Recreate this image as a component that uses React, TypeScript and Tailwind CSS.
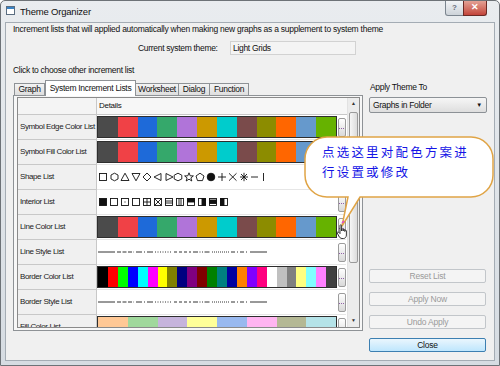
import type { FC, ReactNode } from "react";

const edgeColors = ["#4b4b4b", "#f04146", "#1e6ad9", "#35a86b", "#b074d9", "#cc9900", "#00cccc", "#7a4b4b", "#8c8c00", "#ff6600", "#6699cc", "#66b200"];
const borderColors = [
	"#000000", "#ff0000", "#00ff00", "#0000ff", "#00ffff", "#ff00ff", "#ffff00", "#808000",
	"#000080", "#800080", "#800000", "#008000", "#008080", "#0000a0", "#ff8000", "#8000ff",
	"#ff0080", "#ffffff", "#c0c0c0", "#808080", "#ffff80", "#80ffff", "#ff80ff", "#404040",
];
const fillColors = ["#ffc895", "#a0d89c", "#c6b4dc", "#ffff99", "#99b9ef", "#ffb5f1", "#b4b894", "#b5e3e8"];

const ColorBar: FC<{ colors: string[] }> = ({ colors }) => (
	<div className="flex h-[22px] w-[240px] border border-[#2e2e2e]">
		{colors.map((c, i) => (
			<div key={i} className="flex-1" style={{ backgroundColor: c }} />
		))}
	</div>
);

const DotsButton: FC = () => (
	<div className="flex h-[19px] w-[8px] items-center justify-center gap-[1px] rounded-[2px] border border-[#9c9c9c] bg-gradient-to-b from-white to-[#d9d9d9] pt-[3px]">
		<span className="h-[1px] w-[1px] bg-[#9060a8]" />
		<span className="h-[1px] w-[1px] bg-[#9060a8]" />
		<span className="h-[1px] w-[1px] bg-[#9060a8]" />
	</div>
);

const Row: FC<{ label: string; children: ReactNode }> = ({ label, children }) => (
	<div className="flex h-[25px] shrink-0">
		<div className="flex w-[79px] shrink-0 items-center overflow-hidden whitespace-nowrap border-r border-b border-[#c8c8c8] bg-[#f0f0f0] pl-[2px] text-[8px] tracking-[-0.4px] text-[#222]">
			{label}
		</div>
		<div className="flex w-[240px] shrink-0 items-center border-b border-[#e6e6e6] bg-white">{children}</div>
		<div className="flex w-[9px] shrink-0 items-center justify-center border-b border-[#e6e6e6] bg-white">
			<DotsButton />
		</div>
	</div>
);

const ShapeList: FC = () => (
	<svg width="180" height="10" viewBox="0 0 180 10" fill="none" stroke="#111" strokeWidth="0.9">
		<rect x="1.5" y="1.5" width="7" height="7" />
		<path d="M16.5 1.2 L20 3 V7 L16.5 8.8 L13 7 V3 Z" />
		<path d="M27 1.2 L31 8.5 H23 Z" />
		<path d="M34 1.5 H42 L38 8.8 Z" />
		<path d="M49 1 L53 5 L49 9 L45 5 Z" />
		<path d="M56 5 L63 1.5 V8.5 Z" />
		<path d="M68 1.5 L75 5 L68 8.5 Z" />
		<path d="M80 1.2 L83.8 3.2 V7 L80 8.8 L76.2 7 V3.2 Z" />
		<path d="M91 0.8 L92.2 3.8 L95.4 3.9 L92.9 5.9 L93.8 9 L91 7.2 L88.2 9 L89.1 5.9 L86.6 3.9 L89.8 3.8 Z" />
		<path d="M102 1.2 L106 4 L104.5 8.6 H99.5 L98 4 Z" />
		<circle cx="113" cy="5" r="3.8" fill="#111" />
		<path d="M124 1 V9 M120 5 H128" />
		<path d="M131 1.3 L138.5 8.7 M138.5 1.3 L131 8.7" />
		<path d="M146 0.8 V9.2 M142 5 H150 M143 2 L149 8 M149 2 L143 8" />
		<path d="M153 5 H160" />
		<path d="M165.5 1 V9" />
	</svg>
);

const InteriorList: FC = () => (
	<svg width="180" height="10" viewBox="0 0 180 10" fill="none" stroke="#111" strokeWidth="0.9">
		<rect x="1.5" y="1.5" width="7" height="7" fill="#111" />
		<rect x="12.5" y="1.5" width="7" height="7" />
		<rect x="23.5" y="1.5" width="7" height="7" />
		<rect x="26.5" y="4.5" width="1" height="1" fill="#111" stroke="none" />
		<rect x="34.5" y="1.5" width="7" height="7" />
		<rect x="45.5" y="1.5" width="7" height="7" />
		<path d="M49 1.5 V8.5 M45.5 5 H52.5" />
		<rect x="56.5" y="1.5" width="7" height="7" />
		<path d="M56.5 1.5 L63.5 8.5 M63.5 1.5 L56.5 8.5" />
		<rect x="67.5" y="1.5" width="7" height="7" />
		<path d="M67.5 4 H74.5 M67.5 6 H74.5" />
		<rect x="78.5" y="1.5" width="7" height="7" />
		<path d="M81 1.5 V8.5 M83 1.5 V8.5" />
		<rect x="89.5" y="1.5" width="7" height="7" />
		<rect x="89.5" y="1.5" width="7" height="3.5" fill="#111" />
		<rect x="100.5" y="1.5" width="7" height="7" />
		<rect x="104" y="1.5" width="3.5" height="7" fill="#111" />
		<rect x="111.5" y="1.5" width="7" height="7" />
		<rect x="111.5" y="3" width="7" height="3.5" fill="#111" />
		<rect x="122.5" y="1.5" width="7" height="7" />
		<rect x="122.5" y="1.5" width="3.5" height="7" fill="#111" />
	</svg>
);

const dashes = ["", "4 1.5", "6 2 1 2", "1 1.5", "3 2", "5 1.5 1 1.5 1 1.5", "1 1", "4 2 1 2", ""];

const LineStyles: FC = () => (
	<svg width="172" height="4" viewBox="0 0 172 4">
		{dashes.map((d, i) => (
			<line key={i} x1={i * 19} y1="2" x2={i * 19 + 17} y2="2" stroke="#333" strokeWidth="1" strokeDasharray={d || undefined} />
		))}
	</svg>
);

const Tab: FC<{ label: string; w: string; active?: boolean }> = ({ label, w, active }) =>
	active ? (
		<div className={`relative z-10 -mb-[1px] flex h-[16px] ${w} items-start justify-center whitespace-nowrap border border-b-0 border-[#8e9296] bg-white pt-[1px] text-[8.5px] tracking-[-0.3px]`}>
			{label}
		</div>
	) : (
		<div className={`-ml-[1px] flex h-[12px] ${w} items-center justify-center whitespace-nowrap border border-b-0 border-[#8e9296] bg-gradient-to-b from-[#f3f3f3] to-[#dedede] text-[8.5px] tracking-[-0.3px]`}>
			{label}
		</div>
	);

const SideButton: FC<{ label: string; primary?: boolean; className?: string }> = ({ label, primary, className }) => (
	<div
		className={`flex h-[14px] w-[117px] items-center justify-center rounded-[2px] border text-[8.5px] tracking-[-0.2px] ${
			primary
				? "border-[#3c7fb1] bg-gradient-to-b from-[#eaf6fd] to-[#bee6fd] text-[#111]"
				: "border-[#c2c6ca] bg-[#f4f4f4] text-[#9a9a9a]"
		} ${className ?? ""}`}
	>
		{label}
	</div>
);

const App: FC = () => {
	return (
		<div className="relative h-[366px] w-[500px] overflow-hidden bg-white font-['Liberation_Sans','Noto_Sans_CJK_SC',sans-serif] text-[#111]">
			<div className="flex h-full w-full flex-col rounded-t-[5px] border border-[#6d7277] bg-gradient-to-b from-[#e9ecef] to-[#d6dce2]">
				{/* title bar */}
				<div className="flex h-[21px] shrink-0 items-start">
					<div className="ml-[5px] mt-[5px] flex h-[9px] w-[9px] flex-col border border-[#5a6d80] bg-white">
						<div className="h-[2px] bg-[#3a83c4]" />
					</div>
					<span className="ml-[5px] mt-[4px] text-[9.5px] tracking-[-0.2px] text-[#111]">Theme Organizer</span>
					<div className="ml-auto mr-[12px] flex">
						<div className="flex h-[15px] w-[19px] items-center justify-center rounded-bl-[3px] border border-t-0 border-[#7b858f] bg-gradient-to-b from-[#f2f4f6] to-[#cdd3d9] text-[8px] font-bold text-[#68707a]">
							?
						</div>
						<div className="-ml-[1px] flex h-[15px] w-[24px] items-center justify-center rounded-br-[3px] border border-t-0 border-[#6b2a25] bg-gradient-to-b from-[#e3a195] to-[#c2433a] text-[9px] font-bold text-white">
							✕
						</div>
					</div>
				</div>

				{/* client */}
				<div className="ml-[4px] flex h-[339px] w-[490px] flex-col border border-[#a4acb4] bg-[#f0f0f0] px-[7px]">
					<div className="mt-[1px] h-[11px] whitespace-nowrap text-[8.5px] leading-[11px] tracking-[-0.25px]">
						Increment lists that will applied automatically when making new graphs as a supplement to system theme
					</div>
					<div className="mt-[6px] flex h-[14px] items-center">
						<span className="ml-[125px] w-[87px] whitespace-nowrap text-[8.5px] tracking-[-0.3px]">Current system theme:</span>
						<div className="ml-[5px] flex h-[14px] w-[126px] items-center border border-[#d2d2d2] bg-[#f4f4f4] pl-[2px] text-[8.5px] tracking-[-0.3px]">
							Light Grids
						</div>
					</div>
					<div className="mt-[10px] h-[11px] text-[8.5px] leading-[11px] tracking-[-0.3px]">Click to choose other increment list</div>

					<div className="mt-[4px] flex">
						{/* left: tabs + grid */}
						<div className="flex w-[350px] shrink-0 flex-col">
							<div className="flex h-[15px] items-end pl-[2px]">
								<Tab label="Graph" w="w-[31px]" />
								<Tab label="System Increment Lists" w="w-[91px]" active />
								<Tab label="Worksheet" w="w-[44px]" />
								<Tab label="Dialog" w="w-[32px]" />
								<Tab label="Function" w="w-[40px]" />
							</div>
							<div className="flex h-[236px] flex-col border border-[#8e9296] bg-[#f7f7f7] pt-[1px] pl-[3px] pr-[2px]">
								<div className="flex h-[231px] border border-[#8a8a8a] bg-white">
									<div className="flex flex-1 flex-col overflow-hidden">
										<div className="flex h-[17px] shrink-0 border-b border-[#c8c8c8]">
											<div className="w-[79px] shrink-0 border-r border-[#c8c8c8] bg-[#f4f4f4]" />
											<div className="flex flex-1 items-center bg-[#f7f7f7] pl-[2px] text-[8px] tracking-[-0.3px]">Details</div>
										</div>
										<Row label="Symbol Edge Color List">
											<ColorBar colors={edgeColors} />
										</Row>
										<Row label="Symbol Fill Color List">
											<ColorBar colors={edgeColors} />
										</Row>
										<Row label="Shape List">
											<div className="pl-[1px]">
												<ShapeList />
											</div>
										</Row>
										<Row label="Interior List">
											<div className="pl-[1px]">
												<InteriorList />
											</div>
										</Row>
										<Row label="Line Color List">
											<ColorBar colors={edgeColors} />
										</Row>
										<Row label="Line Style List">
											<div className="pl-[1px]">
												<LineStyles />
											</div>
										</Row>
										<Row label="Border Color List">
											<ColorBar colors={borderColors} />
										</Row>
										<Row label="Border Style List">
											<div className="pl-[1px]">
												<LineStyles />
											</div>
										</Row>
										<Row label="Fill Color List">
											<ColorBar colors={fillColors} />
										</Row>
									</div>
									{/* scrollbar */}
									<div className="flex w-[12px] shrink-0 flex-col border-l border-[#e2e2e2] bg-[#ececec]">
										<div className="flex h-[12px] items-center justify-center text-[5px] text-[#333]">▲</div>
										<div className="mx-[1px] mt-[2px] h-[151px] rounded-[2px] border border-[#9a9a9a] bg-gradient-to-r from-[#f6f6f6] to-[#dcdcdc]" />
										<div className="flex-1" />
										<div className="flex h-[12px] items-center justify-center text-[5px] text-[#333]">▼</div>
									</div>
								</div>
							</div>
						</div>

						{/* right column */}
						<div className="ml-[6px] flex w-[118px] flex-col">
							<div className="mt-[2px] h-[11px] pl-[1px] text-[8.5px] leading-[11px] tracking-[-0.3px]">Apply Theme To</div>
							<div className="mt-[4px] flex h-[16px] w-[118px] items-center justify-between rounded-[2px] border border-[#8c9196] bg-gradient-to-b from-[#f6f6f6] to-[#dedede] pl-[3px] pr-[4px] text-[8.5px] tracking-[-0.3px]">
								<span>Graphs in Folder</span>
								<span className="text-[6px]">▼</span>
							</div>
							<SideButton label="Reset List" className="mt-[156px]" />
							<SideButton label="Apply Now" className="mt-[9px]" />
							<SideButton label="Undo Apply" className="mt-[9px]" />
							<SideButton label="Close" primary className="mt-[9px]" />
						</div>
					</div>
				</div>
			</div>

			{/* callout overlay */}
			<svg className="absolute left-[300px] top-[130px]" width="200" height="100" viewBox="0 0 200 100">
				<path
					d="M27 7 H171 A22 22 0 0 1 193 29 V45 A22 22 0 0 1 171 67 H60 L42 96 L48 67 H27 A22 22 0 0 1 5 45 V29 A22 22 0 0 1 27 7 Z"
					fill="white"
					stroke="#e0a445"
					strokeWidth="1.5"
				/>
			</svg>
			<div className="absolute left-[322px] top-[142px] w-[152px] font-['Noto_Sans_CJK_SC',sans-serif] text-[12.5px] leading-[20px] tracking-[2.2px] text-[#1414e6]">
				点选这里对配色方案进行设置或修改
			</div>

			{/* hand cursor */}
			<svg className="absolute left-[336px] top-[220px]" width="14" height="20" viewBox="0 0 14 20">
				<path d="M8 1 L6 3" stroke="#e040e0" strokeWidth="1.2" />
				<path
					d="M4 5.5 C4 4.6 5.6 4.6 5.6 5.5 V11 V9.5 C5.6 8.7 7.2 8.7 7.2 9.5 V11 V10 C7.2 9.2 8.8 9.2 8.8 10 V11.5 V10.8 C8.8 10 10.4 10 10.4 10.8 V15 C10.4 17 9.2 18.5 7.5 18.5 H6 C4.5 18.5 3.6 17.5 2.8 16 L1.2 13 C0.8 12.2 1.8 11.4 2.6 12.2 L4 13.6 Z"
					fill="white"
					stroke="#222"
					strokeWidth="0.9"
				/>
			</svg>
		</div>
	);
};

export default App;
